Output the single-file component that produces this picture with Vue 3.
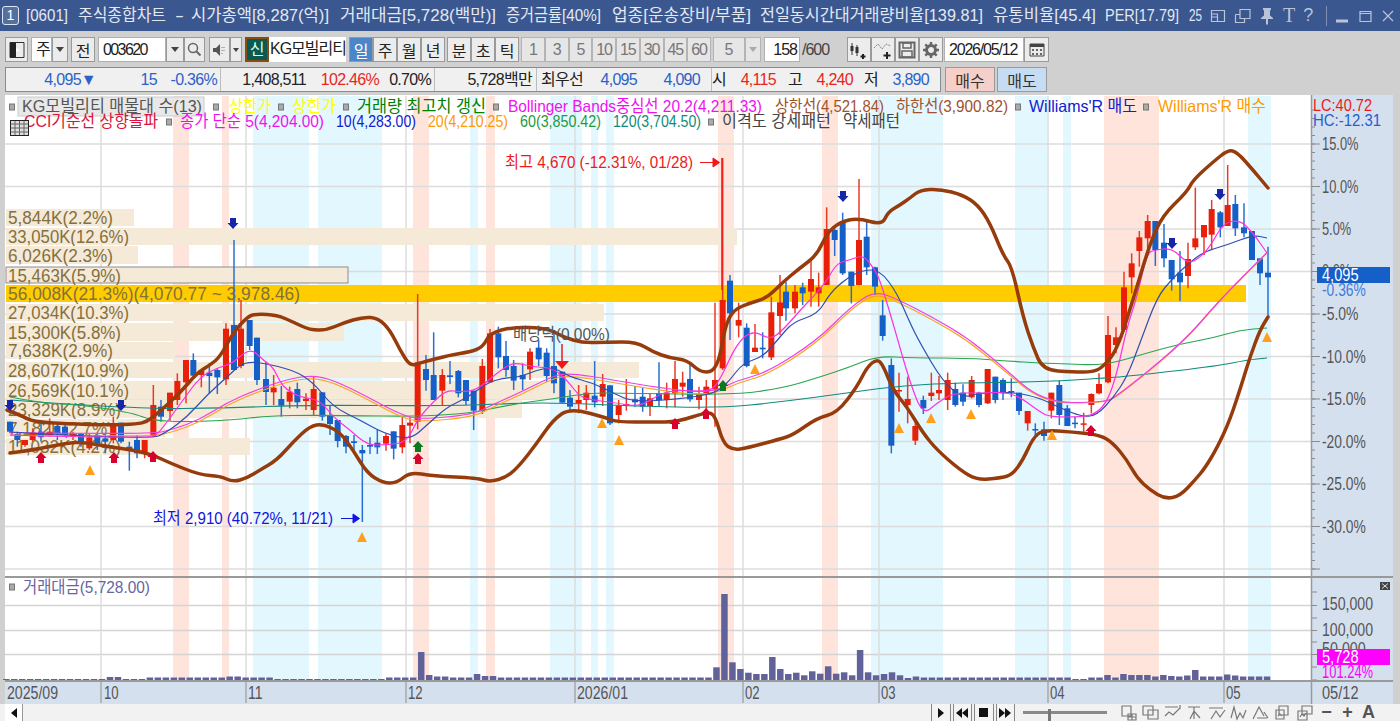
<template>
  <div class="app">
    <!-- title bar -->
    <header class="titlebar">
      <span class="badge">1</span>
      <svg class="title-text" width="1191" height="31" viewBox="19 0 1191 31">
        <text
          v-for="s in titleParts"
          :key="s.t"
          :x="s.x"
          y="21"
          class="title-seg"
          :textLength="s.w"
          lengthAdjust="spacingAndGlyphs"
        >{{ s.t }}</text>
      </svg>
      <div class="win-icons">
        <svg width="16" height="16" viewBox="0 0 16 16"><path d="M1.5 2.5h13v11h-13zM1.5 6h6v7.5M7.5 6v3h-6" class="ico-line" /></svg>
        <svg width="17" height="16" viewBox="0 0 17 16"><path d="M6 1.5h10v9H6zM1.5 6.5H6M1.5 6.5v8h9v-4" class="ico-line" /></svg>
        <svg width="16" height="18" viewBox="0 0 16 18"><path d="M4 1h8v1.5l-1 1v5l3 2.5v1H9v5.5H7V12H2v-1l3-2.5v-5l-1-1z" class="ico-fill" /></svg>
        <span class="win-t">T</span>
        <span class="win-q">?</span>
        <i class="win-sep"></i>
        <svg width="12" height="16" viewBox="0 0 12 16"><path d="M0 11.5h12v3H0z" class="ico-fill" /></svg>
        <svg class="win-max" width="13" height="16" viewBox="0 0 13 16"><path d="M1 3.5h11v10H1zM1 3.5h11v2H1z" class="ico-line" /></svg>
        <svg class="win-close" width="12" height="16" viewBox="0 0 12 16"><path d="M1 3l10 10M11 3L1 13" class="ico-line" /></svg>
      </div>
    </header>

    <!-- toolbar -->
    <div class="toolbar">
      <button class="btn w23">
        <svg width="16" height="18" viewBox="0 0 16 18"><path d="M1 1.5h14v15H1z" fill="none" stroke="#333" /><path d="M1 1.5h6v15H1z" fill="#222" /><path d="M7 7l4 2-4 2z" fill="#fff" /></svg>
      </button>
      <span class="field w21 m3">주</span>
      <button class="btn w16"><i class="caret"></i></button>
      <button class="btn w24 m3">전</button>
      <span class="field code m3">003620</span>
      <button class="btn w18"><i class="caret"></i></button>
      <button class="btn w21">
        <svg width="15" height="15" viewBox="0 0 15 15"><circle cx="6" cy="6" r="4.5" fill="none" stroke="#666" stroke-width="1.5" /><path d="M9.5 9.5l4 4" stroke="#666" stroke-width="2" /></svg>
      </button>
      <button class="btn w21 m4">
        <svg width="15" height="14" viewBox="0 0 15 14"><path d="M1 5h3l4-4v12L4 9H1z" fill="#555" /><path d="M10 4v1M12 4v1M10 7v1M12 7v1M10 10v1" stroke="#777" /></svg>
      </button>
      <button class="btn w12"><i class="caret small"></i></button>
      <span class="new m3">신</span>
      <span class="field name">KG모빌리티</span>
      <div class="group m3">
        <button v-for="p in periods" :key="p" class="btn w24" :class="{ on: p === '일' }">{{ p }}</button>
      </div>
      <div class="group m2">
        <button v-for="p in ticks" :key="p" class="btn w24">{{ p }}</button>
      </div>
      <div class="group m2">
        <button v-for="n in minutes" :key="n" class="btn num">{{ n }}</button>
      </div>
      <button class="btn w32 dim m2">5</button>
      <button class="btn w16 dim"><i class="caret light"></i></button>
      <span class="field w36 right m3">158</span>
      <span class="total">/600</span>
      <div class="group">
        <button class="btn w24">
          <svg width="20" height="20" viewBox="0 0 20 20"><path d="M3 3v12M8 5v11" stroke="#333" /><path d="M1.5 6h3v5h-3zM6.5 7h3v6h-3z" fill="#333" /><path d="M14 14v5M11.5 16.5h5" stroke="#222" stroke-width="2" /></svg>
        </button>
        <button class="btn w24">
          <svg width="20" height="20" viewBox="0 0 20 20"><path d="M1 8l4-4 4 5 4-5 5 2" fill="none" stroke="#888" stroke-dasharray="2 1" /><path d="M14 12v7M10.5 15.5h7" stroke="#222" stroke-width="2" /></svg>
        </button>
        <button class="btn w24">
          <svg width="18" height="18" viewBox="0 0 18 18"><path d="M1.5 1.5h15v15h-15z" fill="none" stroke="#666" stroke-width="2" /><path d="M5 2h8v5H5zM4 10h10v6H4z" fill="none" stroke="#666" stroke-width="1.5" /></svg>
        </button>
        <button class="btn w24">
          <svg width="18" height="18" viewBox="0 0 18 18"><circle cx="9" cy="9" r="4.5" fill="none" stroke="#666" stroke-width="3" /><path d="M9 1v3M9 14v3M1 9h3M14 9h3M3.3 3.3l2 2M12.7 12.7l2 2M14.7 3.3l-2 2M5.3 12.7l-2 2" stroke="#666" stroke-width="2.5" /></svg>
        </button>
      </div>
      <span class="field date">2026/05/12</span>
      <button class="btn w25">
        <svg width="16" height="14" viewBox="0 0 16 14"><path d="M1 1h14v12H1z" fill="none" stroke="#444" /><path d="M1 1h14v3H1z" fill="#444" /><path d="M3 6h2v2H3zM7 6h2v2H7zM11 6h2v2h-2zM3 10h2v2H3zM7 10h2v2H7zM11 10h2v2h-2z" fill="#666" /></svg>
      </button>
    </div>

    <!-- quote row -->
    <div class="quote-row">
      <div class="quote-panel">
        <span
          v-for="(q, i) in quotes"
          :key="i"
          class="cell"
          :class="[q.c, { ruled: q.ruled }]"
          :style="{ width: q.w + 'px', paddingRight: (q.pr || 0) + 'px' }"
        >{{ q.t }}</span>
      </div>
      <button class="trade buy">매수</button>
      <button class="trade sell">매도</button>
    </div>

    <!-- chart: a free canvas, everything is placed by screen coordinate -->
    <svg class="chart" width="1400" height="609" viewBox="0 95 1400 609">
      <rect x="5" y="95" width="1306" height="587" fill="#fff" />
      <rect x="1311" y="95" width="82" height="609" fill="#d5e0ee" />

      <g>
        <rect v-for="b in pinkBands" :key="'p' + b[0]" :x="b[0]" y="96" :width="b[1] - b[0]" height="584" fill="#ffe4dc" />
        <rect v-for="b in cyanBands" :key="'c' + b[0]" :x="b[0]" y="96" :width="b[1] - b[0]" height="584" fill="#e3f7fe" />
      </g>

      <g stroke="#dcdcdc" stroke-width="1.5">
        <line v-for="y in gridY" :key="'g' + y" x1="5" :y1="y" x2="1311" :y2="y" />
        <line v-for="y in volGridY" :key="'vg' + y" x1="5" :y1="y" x2="1311" :y2="y" stroke="#d4d4d4" />
        <line v-for="x in monthX" :key="'m' + x" :x1="x" y1="96" :x2="x" y2="680" />
      </g>

      <!-- price axis -->
      <g stroke="#8a8a8a">
        <line v-for="t in minorTicks" :key="'t' + t" x1="1311" :y1="t" x2="1315" :y2="t" />
        <line v-for="y in gridY" :key="'mt' + y" x1="1311" :y1="y" x2="1320" :y2="y" />
        <line v-for="y in volTicks" :key="'vt' + y" x1="1311" :y1="y" x2="1317" :y2="y" />
      </g>
      <text
        v-for="a in axisLabels"
        :key="a.t"
        x="1322"
        :y="a.y + 6"
        class="axis"
        :textLength="narrow(a.t)"
        lengthAdjust="spacingAndGlyphs"
      >{{ a.t }}</text>

      <!-- volume profile -->
      <g>
        <g v-for="r in profile" :key="r.t">
          <rect
            x="6"
            :y="r.y"
            :width="r.x - 6"
            :height="r.h"
            :fill="r.gold ? '#ffcc00' : '#f5e9d8'"
            :stroke="r.line ? '#8d8d8d' : 'none'"
          />
          <text x="8" :y="r.y + r.h / 2 + 6.5" class="profile" :textLength="r.w" lengthAdjust="spacingAndGlyphs">{{ r.t }}</text>
        </g>
      </g>

      <!-- candles -->
      <g>
        <g v-for="(c, i) in candles" :key="'k' + i">
          <line :x1="c.x" :y1="c.hi" :x2="c.x" :y2="c.lo" :stroke="c.wick" stroke-width="1.5" />
          <rect :x="c.x - 3" :y="c.top" width="6" :height="Math.max(c.bot - c.top, 1.5)" :fill="c.body" />
        </g>
      </g>

      <!-- moving averages and bands -->
      <g fill="none" stroke-linejoin="round">
        <path :d="ma120" stroke="#108a7c" stroke-width="1.2" />
        <path :d="ma60" stroke="#2aa552" stroke-width="1.2" />
        <path :d="ma20" stroke="#f5a623" stroke-width="1.2" />
        <path :d="bbMid" stroke="#f040e0" stroke-width="1.2" />
        <path :d="ma10" stroke="#2f4fb0" stroke-width="1.2" />
        <path :d="ma5" stroke="#ff30e0" stroke-width="1.2" />
        <path :d="bbUpper" stroke="#963c0c" stroke-width="3.5" stroke-linecap="round" />
        <path :d="bbLower" stroke="#963c0c" stroke-width="3.5" stroke-linecap="round" />
      </g>

      <!-- signals -->
      <g>
        <path v-for="s in downArrows" :key="'d' + s[0]" :transform="`translate(${s[0]},${s[1]})`" d="M-3,-6H3V-1H5.5L0,5L-5.5,-1H-3Z" fill="#1626a8" />
        <path v-for="s in redArrows" :key="'r' + s[0]" :transform="`translate(${s[0]},${s[1]})`" d="M-3,6H3V1H5.5L0,-5L-5.5,1H-3Z" fill="#d8002c" />
        <path v-for="s in greenArrows" :key="'e' + s[0]" :transform="`translate(${s[0]},${s[1]})`" d="M-3,6H3V1H5.5L0,-5L-5.5,1H-3Z" fill="#0a7a20" />
        <path v-for="s in triangles" :key="'o' + s[0]" :transform="`translate(${s[0]},${s[1]})`" d="M0,-5L5,5H-5Z" fill="#ff9f1c" />
        <line x1="562" y1="344" x2="562" y2="362" stroke="#f01818" stroke-width="1.5" />
        <path d="M555,361H569L562,369Z" fill="#f01818" />
      </g>

      <!-- annotations -->
      <text x="505" y="167.5" class="note" fill="#f01818" textLength="188" lengthAdjust="spacingAndGlyphs">최고 4,670 (-12.31%, 01/28)</text>
      <path d="M700,162.5H713M713,158L719.5,162.5L713,167Z" stroke="#f01818" fill="#f01818" />
      <line x1="722" y1="158" x2="722" y2="290" stroke="#f01818" stroke-width="1.5" />
      <text x="153" y="523.5" class="note" fill="#1414e0" textLength="180" lengthAdjust="spacingAndGlyphs">최저 2,910 (40.72%, 11/21)</text>
      <path d="M341,518.5H353M353,514L359.5,518.5L353,523Z" stroke="#1414e0" fill="#1414e0" />
      <text x="513" y="339.5" class="note" fill="#555" textLength="97" lengthAdjust="spacingAndGlyphs">배당락(0.00%)</text>

      <!-- legend -->
      <rect x="18" y="97" width="186" height="19" fill="#e8e8e8" stroke="#ccc" />
      <rect v-for="x in legendMarks" :key="'lm' + x[0]" :x="x[0]" :y="x[1]" width="5" height="6" fill="#aaa" stroke="#777" />
      <text
        v-for="l in legend"
        :key="l.t + l.x"
        :x="l.x"
        :y="l.y"
        class="legend"
        :fill="l.c"
        :textLength="l.w"
        lengthAdjust="spacingAndGlyphs"
      >{{ l.t }}</text>
      <g>
        <rect x="10.5" y="120.5" width="18" height="15" fill="#ddd" stroke="#222" />
        <path d="M11 124h17M11 128h17M11 132h17M15 121v14M19.5 121v14M24 121v14" stroke="#666" />
      </g>
      <text x="1313" y="111" class="side" fill="#f01818" textLength="59" lengthAdjust="spacingAndGlyphs">LC:40.72</text>
      <text x="1313" y="126" class="side" fill="#1f5fd0" textLength="68" lengthAdjust="spacingAndGlyphs">HC:-12.31</text>

      <!-- price tag -->
      <text x="1322" y="277" class="axis" :textLength="narrow('0.0%')" lengthAdjust="spacingAndGlyphs">0.0%</text>
      <rect x="1317" y="267" width="73" height="16" fill="#1560c8" />
      <text x="1322" y="281" class="axis-white" :textLength="narrow('4,095')" lengthAdjust="spacingAndGlyphs">4,095</text>
      <text x="1322" y="296" class="axis-blue" :textLength="narrow('-0.36%')" lengthAdjust="spacingAndGlyphs">-0.36%</text>

      <!-- volume pane -->
      <line x1="5" y1="577" x2="1393" y2="577" stroke="#999" stroke-width="2" />
      <rect v-for="(v, i) in volumes" :key="'v' + i" :x="v.x - 3" :y="680 - v.h" width="6.5" :height="v.h" fill="#62629a" />
      <rect x="9.5" y="584" width="5" height="6" fill="#aaa" stroke="#777" />
      <text x="23" y="592.5" class="legend" fill="#66669e" textLength="127" lengthAdjust="spacingAndGlyphs">거래대금(5,728.00)</text>
      <text x="1322" y="610" class="axis" :textLength="narrow('150,000')" lengthAdjust="spacingAndGlyphs">150,000</text>
      <text x="1322" y="636" class="axis" :textLength="narrow('100,000')" lengthAdjust="spacingAndGlyphs">100,000</text>
      <text x="1322" y="655" class="axis" :textLength="narrow('50,000')" lengthAdjust="spacingAndGlyphs">50,000</text>
      <rect x="1317" y="649" width="73" height="16" fill="#ff00ff" />
      <text x="1322" y="663" class="axis-white" :textLength="narrow('5,728')" lengthAdjust="spacingAndGlyphs">5,728</text>
      <text x="1322" y="678" class="axis-magenta" :textLength="narrow('101.24%')" lengthAdjust="spacingAndGlyphs">101.24%</text>
      <rect x="1380" y="582" width="10" height="8" fill="#444" />
      <path d="M1382,583.5L1388,588.5M1388,583.5L1382,588.5" stroke="#ddd" />

      <!-- date axis -->
      <rect x="5" y="681" width="1388" height="23" fill="#d5e0ee" />
      <line x1="5" y1="681" x2="1393" y2="681" stroke="#9a9a9a" stroke-width="2" />
      <line x1="1311.5" y1="95" x2="1311.5" y2="704" stroke="#999" stroke-width="1.5" />
      <line v-for="x in monthX" :key="'dv' + x" :x1="x" y1="682" :x2="x" y2="703" stroke="#8e8e8e" />
      <text
        v-for="d in dates"
        :key="d.t"
        :x="d.x"
        y="699"
        class="axis"
        :textLength="narrow(d.t)"
        lengthAdjust="spacingAndGlyphs"
      >{{ d.t }}</text>
    </svg>

    <!-- bottom bar -->
    <footer class="bottombar">
      <button class="scroll-left"><i class="tri-left"></i></button>
      <div class="track"></div>
      <div class="player">
        <button class="play"><i class="tri-right"></i></button>
        <button class="play"><i class="tri-left"></i><i class="tri-left"></i></button>
        <button class="play"><i class="stop"></i></button>
        <button class="play"><i class="tri-right"></i><i class="tri-right"></i></button>
      </div>
      <div class="slider"><i class="thumb"></i></div>
      <div class="tools">
        <svg v-for="(d, i) in toolIcons" :key="i" width="20" height="17" viewBox="0 0 20 17">
          <path :d="d" fill="none" stroke="#777" stroke-width="1.2" />
        </svg>
        <span class="tool-glyph">−</span>
        <span class="tool-glyph">+</span>
        <span class="tool-glyph">A</span>
      </div>
    </footer>
  </div>
</template>

<script setup>
const titleParts = [
  { t: '[0601]', x: 26, w: 42 },
  { t: '주식종합차트', x: 78, w: 88 },
  { t: '-', x: 175, w: 9 },
  { t: '시가총액[8,287(억)]', x: 191, w: 138 },
  { t: '거래대금[5,728(백만)]', x: 340, w: 156 },
  { t: '증거금률[40%]', x: 506, w: 95 },
  { t: '업종[운송장비/부품]', x: 612, w: 139 },
  { t: '전일동시간대거래량비율[139.81]', x: 760, w: 223 },
  { t: '유통비율[45.4]', x: 993, w: 103 },
  { t: 'PER[17.79]', x: 1105, w: 74 },
  { t: '25', x: 1189, w: 13 }
]

const periods = ['일', '주', '월', '년']
const ticks = ['분', '초', '틱']
const minutes = [1, 3, 5, 10, 15, 30, 45, 60]

const quotes = [
  { t: '4,095▼', w: 90, c: 'blue' },
  { t: '15', w: 61, c: 'blue' },
  { t: '-0.36%', w: 63, pr: 3, c: 'blue' },
  { t: '1,408,511', w: 86, ruled: true },
  { t: '102.46%', w: 73, c: 'red' },
  { t: '0.70%', w: 55, pr: 3 },
  { t: '5,728백만', w: 102, pr: 4, ruled: true },
  { t: '최우선', w: 47, ruled: true },
  { t: '4,095', w: 54, c: 'blue' },
  { t: '4,090', w: 74, pr: 11, c: 'blue' },
  { t: '시', w: 15, ruled: true },
  { t: '4,115', w: 50, c: 'red' },
  { t: '고', w: 26 },
  { t: '4,240', w: 51, c: 'red' },
  { t: '저', w: 25 },
  { t: '3,890', w: 51, c: 'blue' }
]

// the original font is a tall narrow bitmap one, about 7.3px a character
const narrow = (t) => t.length * 7.3

const pinkBands = [[173, 189], [222, 229], [413, 429], [486, 495], [718, 734], [822, 838], [1104, 1159]]
const cyanBands = [[253, 309], [318, 382], [470, 478], [550, 582], [591, 598], [606, 614], [871, 943], [1015, 1047], [1063, 1071], [1248, 1271]]
const monthX = [101, 246, 406, 575, 743, 879, 1048, 1224]
const gridY = [144, 186.5, 229, 271.5, 314, 356.5, 399, 441.5, 484, 526.5, 569]
const volGridY = [605.5, 630.5, 654.5]
const volTicks = [592, 605.5, 618, 630.5, 642, 654.5, 667, 680]

const minorTicks = []
for (let y = 110; y < 576; y += 8.5) minorTicks.push(y)

const axisLabels = [
  { t: '15.0%', y: 144 }, { t: '10.0%', y: 186.5 }, { t: '5.0%', y: 229 },
  { t: '-5.0%', y: 314 }, { t: '-10.0%', y: 356.5 }, { t: '-15.0%', y: 399 },
  { t: '-20.0%', y: 441.5 }, { t: '-25.0%', y: 484 }, { t: '-30.0%', y: 526.5 }
]

const dates = [
  { t: '2025/09', x: 7 }, { t: '10', x: 104 }, { t: '11', x: 248 }, { t: '12', x: 408 },
  { t: '2026/01', x: 577 }, { t: '02', x: 745 }, { t: '03', x: 881 }, { t: '04', x: 1050 },
  { t: '05', x: 1226 }, { t: '05/12', x: 1322 }
]

const profile = [
  { t: '5,844K(2.2%)', y: 209, h: 17, x: 134, w: 105 },
  { t: '33,050K(12.6%)', y: 228, h: 17, x: 737, w: 121 },
  { t: '6,026K(2.3%)', y: 246, h: 18, x: 138, w: 105 },
  { t: '15,463K(5.9%)', y: 267, h: 16, x: 348, w: 113, line: true },
  { t: '56,008K(21.3%)(4,070.77 ~ 3,978.46)', y: 285, h: 17, x: 1246, w: 292, gold: true },
  { t: '27,034K(10.3%)', y: 304, h: 17, x: 604, w: 121 },
  { t: '15,300K(5.8%)', y: 323, h: 18, x: 344, w: 113 },
  { t: '7,638K(2.9%)', y: 342, h: 17, x: 175, w: 105 },
  { t: '28,607K(10.9%)', y: 362, h: 16, x: 639, w: 121 },
  { t: '26,569K(10.1%)', y: 381, h: 18, x: 594, w: 121 },
  { t: '23,329K(8.9%)', y: 400, h: 18, x: 522, w: 113 },
  { t: '7,182K(2.7%)', y: 419, h: 18, x: 165, w: 105 },
  { t: '11,032K(4.2%)', y: 438, h: 17, x: 250, w: 113 }
]

const legendMarks = [
  [9.5, 104], [213.5, 104], [278.5, 104], [343.5, 104], [493.5, 104],
  [1015.5, 104], [1143.5, 104], [166.5, 119], [708.5, 119]
]

const legend = [
  { t: 'KG모빌리티 매물대 수(13)', x: 22, y: 112, w: 180, c: '#555' },
  { t: '상한가', x: 229, y: 112, w: 42, c: '#ffff00' },
  { t: '상한가', x: 292, y: 112, w: 44, c: '#ffff00' },
  { t: '거래량 최고치 갱신', x: 357, y: 112, w: 129, c: '#008000' },
  { t: 'Bollinger Bands중심선 20.2(4,211.33)', x: 508, y: 112, w: 254, c: '#f010f0' },
  { t: '상한선(4,521.84)', x: 775, y: 112, w: 109, c: '#a0522d' },
  { t: '하한선(3,900.82)', x: 896, y: 112, w: 112, c: '#a0522d' },
  { t: "Williams'R 매도", x: 1029, y: 112, w: 108, c: '#1020d0' },
  { t: "Williams'R 매수", x: 1158, y: 112, w: 108, c: '#ff9a00' },
  { t: 'CCI기준선 상향돌파', x: 24, y: 127, w: 134, c: '#dc143c' },
  { t: '종가 단순 5(4,204.00)', x: 180, y: 127, w: 144, c: '#f010f0' },
  { t: '10(4,283.00)', x: 336, y: 127, w: 80, c: '#1020d0' },
  { t: '20(4,210.25)', x: 428, y: 127, w: 80, c: '#ff9a00' },
  { t: '60(3,850.42)', x: 520, y: 127, w: 81, c: '#1f9a40' },
  { t: '120(3,704.50)', x: 613, y: 127, w: 88, c: '#108a7c' },
  { t: '이격도 강세패턴', x: 722, y: 127, w: 109, c: '#444' },
  { t: '약세패턴', x: 843, y: 127, w: 57, c: '#444' }
]

// rows read off zoomed crops of the chart: x, body top, body bottom, high, low, colour
const sections = [
  [0, 300, [
    [30, 365, 395, 365, 400, 'b'], [52, 402, 420, 395, 440, 'b'], [75, 420, 435, 420, 440, 'r'],
    [98, 398, 420, 385, 425, 'r'], [123, 395, 412, 360, 425, 'b'], [149, 395, 408, 355, 410, 'r'],
    [172, 378, 400, 375, 420, 'b'], [195, 380, 405, 378, 410, 'b'], [219, 403, 410, 395, 420, 'r'],
    [243, 402, 432, 400, 440, 'b'], [268, 412, 445, 400, 450, 'r'], [292, 405, 430, 400, 450, 'b'],
    [316, 415, 425, 400, 460, 'b'], [340, 370, 420, 350, 430, 'r'], [363, 368, 425, 368, 430, 'b'],
    [388, 440, 450, 425, 512, 'b'], [411, 420, 460, 405, 475, 'b'], [434, 420, 458, 420, 475, 'r'],
    [460, 315, 410, 255, 412, 'r'], [483, 320, 350, 300, 365, 'b'], [510, 278, 333, 278, 362, 'r'],
    [532, 243, 300, 220, 315, 'r'], [558, 180, 247, 180, 310, 'r'], [580, 180, 227, 160, 235, 'b'],
    [604, 212, 225, 212, 262, 'r'], [628, 218, 228, 190, 280, 'b'], [652, 210, 232, 205, 282, 'b'],
    [678, 86, 238, 70, 255, 'r'], [702, 75, 210, -180, 210, 'b'], [723, 86, 198, 0, 205, 'r'],
    [749, 60, 138, 60, 150, 'b'], [771, 113, 240, 113, 255, 'b']
  ]],
  [260, 300, [
    [18, 237, 276, 185, 315, 'b'], [41, 263, 277, 225, 315, 'r'], [64, 297, 317, 258, 350, 'b'],
    [89, 275, 305, 260, 325, 'r'], [112, 267, 307, 248, 325, 'b'], [138, 296, 303, 280, 330, 'r'],
    [161, 267, 330, 230, 345, 'r'], [187, 277, 350, 277, 362, 'b'], [210, 347, 372, 315, 405, 'b'],
    [233, 360, 423, 360, 442, 'b'], [258, 408, 440, 405, 460, 'b'], [282, 424, 429, 405, 450, 'b'],
    [307, 450, 460, 435, 666, 'b'], [330, 435, 440, 412, 462, 'b'], [352, 428, 442, 390, 462, 'b'],
    [378, 408, 431, 400, 452, 'r'], [401, 394, 446, 394, 478, 'b'], [427, 375, 442, 350, 460, 'r'],
    [450, 368, 377, 352, 430, 'r'], [473, 188, 365, -18, 388, 'r'], [498, 207, 240, 165, 272, 'b'],
    [521, 225, 300, 97, 300, 'b'], [547, 225, 272, 207, 318, 'r'], [570, 226, 231, 183, 252, 'b'],
    [595, 213, 280, 210, 292, 'b'], [618, 240, 303, 240, 316, 'b'], [641, 272, 332, 272, 390, 'b'],
    [667, 198, 333, 177, 342, 'r'], [690, 100, 247, 87, 247, 'r'], [715, 100, 172, 80, 205, 'b'],
    [738, 168, 210, 123, 230, 'b'], [761, 198, 242, 180, 270, 'b']
  ]],
  [520, 280, [
    [8, 285, 298, 250, 330, 'b'], [30, 215, 268, 205, 300, 'r'], [56, 203, 238, 180, 258, 'b'],
    [80, 218, 288, 205, 305, 'b'], [102, 258, 310, 150, 340, 'b'], [127, 275, 368, 275, 368, 'b'],
    [150, 353, 380, 330, 395, 'b'], [176, 360, 370, 315, 400, 'r'], [199, 338, 360, 315, 390, 'r'],
    [224, 347, 367, 243, 382, 'b'], [248, 312, 350, 282, 378, 'r'], [270, 316, 430, 316, 435, 'b'],
    [296, 377, 405, 360, 430, 'r'], [319, 372, 377, 297, 392, 'r'], [345, 358, 367, 318, 380, 'b'],
    [368, 350, 380, 322, 395, 'b'], [390, 355, 378, 340, 408, 'r'], [417, 340, 360, 247, 378, 'b'],
    [440, 338, 360, 308, 385, 'r'], [465, 297, 340, 243, 382, 'r'], [488, 308, 320, 275, 350, 'r'],
    [510, 297, 358, 248, 365, 'b'], [537, 342, 360, 320, 388, 'r'], [559, 320, 342, 300, 398, 'r'],
    [585, 300, 328, 68, 440, 'r'], [608, 60, 265, -366, 270, 'r'], [630, 2, 100, -15, 180, 'b'],
    [656, 120, 137, 68, 172, 'r'], [680, 143, 258, 130, 262, 'b'], [705, 203, 216, 132, 216, 'r'],
    [728, 203, 208, 157, 235, 'b'], [754, 97, 232, 50, 240, 'r']
  ]],
  [780, 190, [
    [0, 337, 378, 255, 435, 'r'], [18, 305, 355, 275, 392, 'b'], [45, 305, 355, 285, 370, 'r'],
    [68, 292, 310, 278, 345, 'b'], [93, 267, 305, 207, 350, 'r'], [116, 292, 310, 248, 350, 'r'],
    [140, 117, 285, 52, 285, 'r'], [164, 120, 150, 105, 198, 'b'], [188, 97, 250, 68, 255, 'b'],
    [214, 245, 288, 245, 340, 'b'], [237, 150, 285, -33, 285, 'r'], [260, 140, 232, 87, 255, 'b'],
    [285, 232, 290, 230, 315, 'b'], [308, 376, 438, 330, 452, 'b'], [334, 525, 767, 505, 790, 'b'],
    [357, 600, 601, 548, 665, 'r'], [383, 627, 645, 560, 700, 'r'], [406, 708, 752, 685, 765, 'r'],
    [430, 630, 655, 617, 672, 'b'], [454, 608, 618, 548, 633, 'r'], [477, 600, 610, 558, 630, 'r'],
    [503, 570, 630, 548, 660, 'r'], [526, 597, 645, 578, 650, 'b'], [549, 608, 635, 583, 648, 'b'],
    [575, 570, 622, 558, 625, 'r'], [597, 608, 645, 605, 652, 'b'], [623, 537, 640, 537, 642, 'r'],
    [646, 560, 630, 560, 640, 'b'], [669, 570, 610, 565, 630, 'b'], [694, 603, 607, 565, 622, 'b'],
    [717, 608, 663, 608, 675, 'b'], [743, 663, 700, 663, 722, 'r'], [766, 717, 720, 700, 740, 'b']
  ]],
  [1040, 150, [
    [12, 838, 858, 815, 872, 'b'], [34, 728, 782, 728, 805, 'r'], [58, 705, 795, 692, 825, 'b'],
    [82, 775, 828, 765, 828, 'b'], [105, 818, 822, 800, 835, 'b'], [131, 820, 824, 788, 845, 'r'],
    [154, 732, 765, 730, 790, 'r'], [177, 702, 730, 670, 733, 'r'], [204, 555, 697, 498, 700, 'r'],
    [228, 562, 585, 532, 610, 'r'], [252, 412, 540, 365, 545, 'r'], [275, 340, 382, 310, 430, 'r'],
    [298, 262, 303, 243, 350, 'r'], [323, 213, 265, 195, 295, 'r'], [346, 213, 300, 213, 348, 'b'],
    [372, 278, 325, 222, 352, 'b'], [395, 330, 388, 330, 422, 'b'], [420, 368, 397, 303, 453, 'b'],
    [444, 327, 378, 278, 415, 'r'], [466, 265, 292, 113, 300, 'r'], [492, 225, 262, 225, 315, 'r'],
    [515, 177, 254, 150, 298, 'r'], [541, 187, 232, 183, 262, 'b'], [563, 165, 228, 45, 228, 'r'],
    [586, 162, 235, 135, 258, 'b'], [612, 232, 250, 160, 262, 'b'], [636, 243, 330, 243, 330, 'b'],
    [660, 325, 370, 325, 405, 'b'], [684, 368, 382, 290, 500, 'b']
  ]]
]

const candles = []
for (const [ox, oy, rows] of sections) {
  for (const r of rows) {
    const red = r[5] === 'r'
    candles.push({
      x: ox + r[0] / 3,
      top: oy + r[1] / 3,
      bot: oy + r[2] / 3,
      hi: oy + r[3] / 3,
      lo: oy + r[4] / 3,
      body: red ? '#e8200a' : '#1560c8',
      wick: red ? '#ea3a26' : '#2a6fd0'
    })
  }
}

// rounds the corners between read-off points so the curves don't look polygonal
const smooth = (pts) => {
  let d = `M${pts[0][0]},${pts[0][1]}`
  for (let i = 1; i < pts.length - 1; i++) {
    const mx = (pts[i][0] + pts[i + 1][0]) / 2
    const my = (pts[i][1] + pts[i + 1][1]) / 2
    d += `Q${pts[i][0]},${pts[i][1]} ${mx},${my}`
  }
  const last = pts[pts.length - 1]
  return d + `L${last[0]},${last[1]}`
}

const upper = [
  [7, 410], [20, 415], [33, 421.7], [67, 424], [110, 425], [137, 424], [147, 421.7], [158, 413], [180, 393],
  [197, 373], [210, 365], [220, 357], [233, 333], [248, 316], [257, 314], [277, 315], [293, 322], [310, 330],
  [327, 330], [343, 323], [363, 317], [378, 318], [390, 330], [400, 350], [410, 366], [420, 363], [450, 355],
  [470, 352], [483, 347], [490, 333], [513, 327], [547, 328], [563, 337], [583, 343], [607, 342], [637, 342],
  [653, 352], [670, 358], [687, 360], [700, 372], [713, 372], [720, 357], [725, 327], [733, 310], [750, 303],
  [767, 298], [783, 282], [800, 268], [817, 255], [827, 233], [840, 222], [858, 218], [882, 225], [888, 212],
  [900, 205], [910, 198], [920, 190], [940, 189], [963, 195], [978, 205], [990, 223], [1003, 255], [1012, 267],
  [1023, 317], [1033, 347], [1043, 370], [1073, 372], [1093, 372], [1103, 367], [1117, 350], [1133, 300],
  [1150, 243], [1163, 215], [1187, 192], [1193, 180], [1213, 162], [1228, 150], [1237, 152], [1253, 170], [1268, 188]
]
const lower = [
  [10, 453], [33, 450], [67, 443], [83, 442], [110, 447], [133, 450], [153, 455], [170, 463], [200, 475],
  [220, 476], [233, 482], [247, 478], [260, 470], [277, 460], [293, 442], [310, 426], [323, 424], [340, 432],
  [353, 450], [367, 473], [383, 483], [397, 483], [410, 472], [433, 476], [477, 478], [490, 482], [507, 477],
  [520, 465], [537, 443], [553, 420], [570, 408], [607, 418], [617, 422], [653, 422], [677, 422], [707, 412],
  [715, 415], [723, 443], [733, 450], [747, 448], [780, 439], [793, 435], [817, 418], [837, 413], [857, 387],
  [867, 367], [877, 359], [883, 365], [893, 390], [907, 407], [923, 433], [937, 450], [960, 470], [977, 480],
  [1000, 478], [1012, 475], [1023, 460], [1033, 438], [1043, 430], [1073, 432], [1100, 435], [1113, 443],
  [1127, 460], [1137, 478], [1150, 490], [1165, 499], [1180, 496], [1195, 480], [1205, 468], [1217, 448],
  [1230, 420], [1243, 380], [1250, 357], [1260, 330], [1268, 317]
]
const five = [
  [10, 435], [73, 437], [133, 437], [150, 437], [157, 435], [170, 418], [183, 400], [200, 377], [217, 368],
  [233, 363], [243, 353], [253, 350], [263, 360], [273, 367], [280, 382], [287, 390], [300, 397], [320, 400],
  [333, 417], [350, 430], [367, 445], [387, 445], [407, 442], [417, 420], [433, 402], [447, 390], [460, 392],
  [477, 390], [497, 373], [513, 362], [533, 367], [553, 368], [567, 380], [580, 397], [593, 400], [617, 403],
  [640, 407], [663, 392], [683, 390], [710, 392], [720, 380], [737, 343], [753, 330], [770, 340], [783, 330],
  [803, 307], [817, 293], [827, 280], [837, 263], [850, 260], [863, 255], [873, 267], [880, 280], [893, 323],
  [910, 383], [923, 415], [937, 403], [953, 393], [980, 393], [1013, 392], [1040, 412], [1050, 417], [1083, 417],
  [1097, 413], [1108, 400], [1117, 373], [1127, 327], [1137, 297], [1147, 253], [1155, 250], [1172, 248],
  [1187, 263], [1197, 260], [1210, 247], [1223, 223], [1240, 220], [1253, 233], [1267, 253]
]
const ten = [
  [10, 432], [150, 440], [167, 432], [187, 417], [207, 395], [227, 377], [240, 365], [250, 362], [263, 363],
  [293, 370], [313, 382], [333, 407], [360, 420], [383, 433], [410, 440], [427, 425], [447, 407], [467, 398],
  [487, 383], [503, 378], [520, 377], [537, 370], [553, 367], [570, 377], [593, 383], [613, 393], [633, 402],
  [680, 399], [717, 393], [730, 380], [743, 363], [763, 357], [780, 337], [793, 322], [818, 314], [830, 293],
  [847, 278], [863, 270], [880, 270], [897, 293], [910, 323], [920, 343], [943, 382], [963, 398], [980, 393],
  [1013, 392], [1040, 398], [1060, 408], [1083, 417], [1097, 415], [1113, 398], [1127, 377], [1140, 343],
  [1157, 297], [1173, 278], [1187, 265], [1203, 252], [1227, 245], [1253, 235], [1267, 238]
]
const twenty = [
  [10, 435], [150, 437], [173, 432], [200, 422], [227, 405], [257, 392], [293, 380], [320, 378], [350, 390],
  [400, 417], [420, 422], [473, 417], [493, 407], [520, 395], [550, 380], [567, 375], [617, 383], [657, 390],
  [710, 396], [737, 383], [767, 375], [817, 343], [850, 310], [875, 293], [900, 303], [933, 320], [967, 340],
  [1000, 367], [1043, 403], [1103, 403], [1117, 397], [1183, 343], [1220, 300], [1267, 253]
]
const sixty = [
  [10, 397], [40, 403], [83, 405], [133, 413], [150, 420], [183, 422], [233, 420], [267, 416], [317, 415],
  [450, 417], [520, 403], [553, 399], [587, 393], [620, 393], [733, 395], [783, 388], [817, 378], [850, 367],
  [877, 356], [913, 358], [967, 358], [1007, 361], [1040, 363], [1070, 364], [1093, 365], [1113, 363],
  [1147, 353], [1180, 344], [1213, 338], [1240, 330], [1267, 328]
]
const oneTwenty = [
  [10, 400], [133, 409], [233, 408], [300, 405], [450, 406], [520, 403], [563, 403], [633, 406], [720, 408],
  [780, 402], [847, 393], [890, 387], [947, 383], [1040, 382], [1107, 378], [1140, 375], [1217, 366], [1247, 360], [1267, 358]
]

const bbUpper = smooth(upper)
const bbLower = smooth(lower)
const ma5 = smooth(five)
const ma10 = smooth(ten)
const ma20 = smooth(twenty)
const bbMid = smooth(twenty.map(([x, y]) => [x, x < 1040 ? y - 2.5 : y - 0.5]))
const ma60 = smooth(sixty)
const ma120 = smooth(oneTwenty)

const downArrows = [[10, 406], [121, 406], [233, 224], [843, 197], [1172, 244], [1220, 195]]
const redArrows = [[41, 457], [114, 457], [153, 456], [418, 458], [675, 423], [706, 413], [1091, 430]]
const greenArrows = [[418, 446], [723, 385]]
const triangles = [[90, 470], [362, 537], [602, 423], [619, 440], [755, 369], [899, 428], [931, 418], [971, 414], [1052, 435], [1267, 337]]

// volume bar heights by screen x; what isn't listed falls back on the plain run below
const volSpikes = {
  112: 3, 120: 3, 152: 2.5, 160: 2.5, 168: 2.5, 176: 2.5, 184: 2.5, 192: 2.5, 200: 2.5, 208: 2.5, 216: 2.5,
  226: 3.5, 233: 4, 241: 3.5, 249: 2.5, 257: 2.5, 265: 2.5, 390: 2.5, 398: 2.5, 417: 28, 426: 5, 434: 3.5, 443: 3.5,
  474: 6, 485: 4, 491: 4, 715: 12.7, 723: 86, 730: 17.7, 739: 11, 746: 7.3, 755: 6, 762: 6, 771: 23, 779: 11,
  786: 6, 795: 7.3, 802: 4.7, 811: 8.7, 819: 6.3, 826: 13.7, 835: 6.3, 843: 7.7, 851: 4.7, 859: 30,
  867: 7.7, 875: 4.7, 883: 6, 891: 7.7, 899: 4.7, 907: 2, 915: 3.5, 1108: 5, 1114: 2.5, 1124: 6, 1133: 5,
  1141: 5, 1149: 5, 1157: 3.5, 1165: 5, 1173: 4, 1180: 3.5, 1188: 4.5, 1195: 10, 1204: 3.5, 1212: 3.5,
  1220: 3.5, 1228: 5.5, 1236: 4.5, 1244: 3.5, 1252: 3.5, 1260: 3.5, 1268: 3.5
}
const spikeXs = Object.keys(volSpikes).map(Number)
const plainVolume = (x) => {
  if (x < 110 || (x > 125 && x < 150) || (x > 270 && x < 385)) return 1
  if (x > 1071 && x < 1090) return 1
  return 2.5
}
const volumes = []
for (let i = 0; i <= 158; i++) {
  const x = 6 + i * 7.98
  const near = spikeXs.find((s) => Math.abs(s - x) < 4)
  volumes.push({ x, h: near !== undefined ? volSpikes[near] : plainVolume(x) })
}

const toolIcons = [
  'M3 2h9v10H3zM9 10h8v6H9zM13 10v6M9 13h8',
  'M2 2h10v9H2zM7 6h10v9H7z',
  'M2 3h13M2 12l4-4 4 3 7-7M17 1v4',
  'M3 3h12M9 3v12M5 15l4-8 6 7',
  'M2 4h14M4 15l5-8 4 6 5-7',
  'M2 14l3-11 3 12 3-6 3 5 3-8',
  'M2 15l6-12 5 9M6 14h10M13 8l4 6',
  'M6 2h9v9H6zM3 6h8v9H3zM5 12l2-2 2 2',
  'M7 2h10v8H7zM3 7h9v9H3zM5 13l2-3 2 2 2-3'
]
</script>

<style scoped>
.app {
  width: 1400px;
  height: 721px;
  overflow: hidden;
  display: flex;
  flex-direction: column;
  background: #d0d0d0;
  font-family: "Liberation Sans", "Noto Sans CJK KR", sans-serif;
  font-size: 16px;
  color: #222;
}

/* title bar */
.titlebar {
  height: 31px;
  flex: none;
  display: flex;
  align-items: center;
  background: #3a5790;
  color: #e3e8f2;
  padding-left: 2px;
}
.badge {
  box-sizing: border-box;
  width: 17px;
  height: 19px;
  flex: none;
  border: 1px solid #dfe6f2;
  border-radius: 3px;
  text-align: center;
  line-height: 17px;
  font-size: 14px;
  background: #54709f;
  color: #fff;
}
.title-text {
  display: block;
  flex: none;
}
.title-seg {
  font-size: 16.5px;
  fill: #e3e8f2;
}
.win-icons {
  display: flex;
  align-items: center;
  gap: 8px;
  color: #b9c4d8;
}
.ico-line {
  fill: none;
  stroke: #b9c4d8;
  stroke-width: 1.2;
}
.ico-fill {
  fill: #b9c4d8;
}
.win-t {
  font-family: "Liberation Serif", serif;
  font-size: 20px;
}
.win-q {
  font-size: 18px;
}
.win-sep {
  width: 1px;
  height: 20px;
  background: #7f90b4;
  margin: 0 1px 0 5px;
}
.win-max {
  margin-left: 3px;
}
.win-close {
  margin-left: 2px;
}

/* toolbar */
.toolbar {
  height: 25px;
  flex: none;
  margin-top: 6px;
  padding-left: 5px;
  display: flex;
  align-items: stretch;
}
.btn {
  box-sizing: border-box;
  padding: 0;
  flex: none;
  font: inherit;
  color: #222;
  background: #ececec;
  border: 1px solid #9a9a9a;
  display: flex;
  align-items: center;
  justify-content: center;
}
.btn.on {
  background: #4a86c8;
  color: #fff;
}
.field {
  box-sizing: border-box;
  flex: none;
  background: #fff;
  border: 1px solid #b0b0b0;
  line-height: 23px;
  padding-left: 4px;
  white-space: nowrap;
  overflow: hidden;
}
.group {
  display: flex;
}
.w12 { width: 12px; }
.w16 { width: 16px; }
.w18 { width: 18px; }
.w21 { width: 21px; }
.w23 { width: 23px; }
.w24 { width: 24px; }
.w25 { width: 25px; }
.w32 { width: 32px; }
.w36 { width: 36px; }
.m2 { margin-left: 2px; }
.m3 { margin-left: 3px; }
.m4 { margin-left: 4px; }
.num {
  width: 23.75px;
  color: #777;
  background: #e6e6e6;
  border-color: #b4b4b4;
  letter-spacing: -1px;
}
.dim {
  color: #777;
  background: #e6e6e6;
  border-color: #b4b4b4;
}
.caret {
  width: 0;
  height: 0;
  border: 4px solid transparent;
  border-top: 5px solid #444;
  border-bottom: 0;
}
.caret.small {
  border-width: 3px;
  border-top-width: 4px;
  border-bottom: 0;
}
.caret.light {
  border-top-color: #aaa;
}
.code {
  width: 68px;
  letter-spacing: -1.6px;
}
.new {
  box-sizing: border-box;
  width: 24px;
  flex: none;
  background: #0a5a50;
  border: 2px solid #8a4a14;
  color: #dfe;
  text-align: center;
  line-height: 21px;
}
.name {
  width: 77px;
  border: 0;
  padding-left: 1px;
  letter-spacing: -1px;
}
.right {
  text-align: right;
  padding-right: 2px;
  letter-spacing: -1px;
}
.total {
  width: 45px;
  margin-left: 2px;
  line-height: 25px;
  color: #444;
  flex: none;
  letter-spacing: -1px;
}
.date {
  width: 80px;
  margin-left: 1px;
  letter-spacing: -1.2px;
}

/* quote row */
.quote-row {
  height: 25px;
  flex: none;
  margin-top: 5px;
  padding-left: 5px;
  display: flex;
}
.quote-panel {
  box-sizing: border-box;
  width: 936px;
  flex: none;
  display: flex;
  background: #f0f0f0;
  border: 1px solid #8a8a8a;
  line-height: 23px;
  letter-spacing: -0.7px;
}
.cell {
  box-sizing: border-box;
  flex: none;
  text-align: right;
  white-space: nowrap;
}
.cell.ruled {
  border-left: 1px solid #bdbdbd;
}
.blue { color: #2c62c8; }
.red { color: #e8261c; }
.trade {
  box-sizing: border-box;
  width: 50px;
  margin-left: 4px;
  padding: 0;
  font: inherit;
  color: #333;
  border: 1px solid #9a9a9a;
}
.trade.sell {
  margin-left: 2px;
}
.buy { background: #f5cfc9; }
.sell { background: #c6dcf2; }

/* chart */
.chart {
  display: block;
  flex: none;
  margin-top: 3px;
}
.axis,
.axis-white,
.axis-blue,
.axis-magenta {
  font-size: 17.5px;
}
.axis { fill: #555; }
.axis-white { fill: #fff; }
.axis-blue { fill: #3f7be0; }
.axis-magenta { fill: #ff00ff; }
.profile {
  font-size: 18px;
  fill: #84703c;
}
.legend,
.note,
.side {
  font-size: 16.5px;
}

/* bottom bar */
.bottombar {
  flex: 1;
  display: flex;
  align-items: center;
  padding-left: 5px;
  background: #f2f2f2;
  min-height: 0;
}
.scroll-left {
  width: 18px;
  height: 17px;
  flex: none;
  padding: 0;
  background: #fff;
  border: 0;
  border-right: 1px solid #999;
  display: flex;
  align-items: center;
  justify-content: center;
}
.tri-left,
.tri-right {
  width: 0;
  height: 0;
  border: 5px solid transparent;
}
.tri-left {
  border-left: 0;
  border-right: 6px solid #111;
}
.tri-right {
  border-right: 0;
  border-left: 6px solid #111;
}
.stop {
  width: 9px;
  height: 9px;
  background: #111;
}
.track {
  width: 908px;
  height: 17px;
  flex: none;
}
.player {
  display: flex;
  gap: 2px;
}
.play {
  width: 19.5px;
  height: 17px;
  padding: 0;
  background: #f4f4f4;
  border: 1px solid #888;
  border-top: 0;
  border-bottom: 0;
  display: flex;
  align-items: center;
  justify-content: center;
}
.slider {
  position: relative;
  width: 84px;
  height: 3px;
  flex: none;
  margin-left: 8px;
  background: #8a8a8a;
}
.thumb {
  position: absolute;
  left: 25px;
  top: -2px;
  width: 3px;
  height: 12px;
  background: #777;
}
.tools {
  display: flex;
  align-items: center;
  gap: 2px;
  margin-left: 12px;
}
.tool-glyph {
  width: 19px;
  text-align: center;
  font-weight: 700;
  font-size: 18px;
  line-height: 17px;
  color: #555;
}
</style>
